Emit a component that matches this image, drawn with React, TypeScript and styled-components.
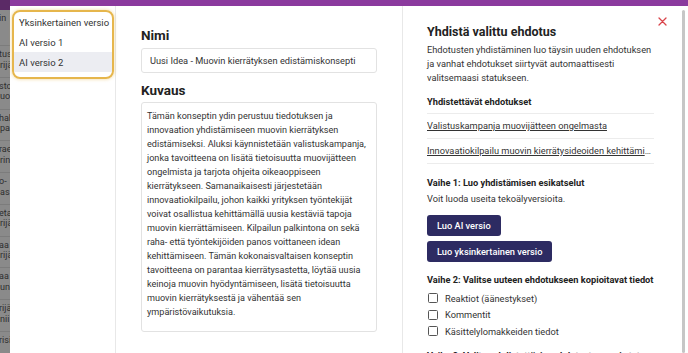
import React from "react";
import styled, { createGlobalStyle } from "styled-components";

const GlobalStyle = createGlobalStyle`
  html, body { margin: 0; padding: 0; height: 353px; overflow: hidden; background: #fff; }
  body { font-family: Roboto, "Noto Sans", Arial, sans-serif; color: #2b2b2b; }
  * { box-sizing: border-box; }
`;

const Page = styled.div`
  display: flex;
  height: 353px;
  overflow: hidden;
`;

const Backdrop = styled.div`
  flex: none;
  width: 10px;
  display: flex;
  flex-direction: column;
  background: #8a8a8a;
  overflow: hidden;
`;

const BackdropHeader = styled.div`
  flex: none;
  height: 10px;
  background: #5b2a66;
`;

const BackdropRow = styled.div<{ $h: number }>`
  flex: none;
  height: ${(p) => p.$h}px;
  border-bottom: 1px solid #7c7c7c;
  padding-top: 3px;
  font-size: 9px;
  line-height: 10.5px;
  color: #2e2e2e;
  white-space: nowrap;
  text-indent: -1px;
`;

const Modal = styled.div`
  flex: 1;
  display: flex;
  flex-direction: column;
  min-width: 0;
  background: #fff;
`;

const TopBar = styled.div`
  flex: none;
  height: 6px;
  background: #8b3a9e;
`;

const Body = styled.div`
  flex: 1;
  display: flex;
  min-height: 0;
`;

const LeftPanel = styled.div`
  flex: none;
  width: 106px;
  border-right: 1px solid #e8e8e8;
  padding: 4px 1px 0 2px;
`;

const VersionList = styled.div`
  border: 2px solid #e6b64c;
  border-radius: 8px;
  box-shadow: 0 0 3px 1px rgba(230, 182, 76, 0.35);
  padding: 0 0 5px;
  overflow: hidden;
`;

const VersionItem = styled.div<{ $active?: boolean }>`
  height: 20px;
  display: flex;
  align-items: center;
  padding-left: 5px;
  font-size: 9.5px;
  color: #333;
  background: ${(p) => (p.$active ? "#ecedf2" : "transparent")};
`;

const MiddlePanel = styled.div`
  flex: none;
  width: 287px;
  border-right: 1px solid #e8e8e8;
  padding: 21px 25px 0;
  display: flex;
  flex-direction: column;
`;

const FieldLabel = styled.div<{ $mt?: number }>`
  font-size: 13.5px;
  line-height: 16px;
  font-weight: 700;
  color: #222;
  margin-top: ${(p) => p.$mt ?? 0}px;
`;

const TextInput = styled.input`
  margin-top: 5px;
  height: 25px;
  width: 236px;
  border: 1px solid #e2e2e2;
  border-radius: 3px;
  padding: 0 8px;
  font-family: Roboto, "Noto Sans", Arial, sans-serif;
  font-size: 9.25px;
  color: #333;
  outline: none;
`;

const TextArea = styled.textarea`
  margin-top: 4px;
  width: 236px;
  height: 230px;
  border: 1px solid #e2e2e2;
  border-radius: 3px;
  padding: 6px 1px 0 5px;
  font-family: Roboto, "Noto Sans", Arial, sans-serif;
  font-size: 9.1px;
  line-height: 14px;
  color: #333;
  resize: none;
  overflow: hidden;
  outline: none;
`;

const RightPanel = styled.div`
  flex: none;
  width: 278px;
  position: relative;
  padding: 18px 27px 0 24px;
  display: flex;
  flex-direction: column;
  overflow: hidden;
`;

const CloseButton = styled.button`
  position: absolute;
  top: 11px;
  left: 255px;
  width: 9px;
  height: 9px;
  padding: 0;
  border: none;
  background: none;
  display: flex;
  cursor: pointer;
`;

const Title = styled.h2`
  margin: 0;
  font-size: 12.5px;
  line-height: 16px;
  font-weight: 700;
  color: #222;
`;

const Paragraph = styled.p<{ $mt?: number }>`
  margin: ${(p) => p.$mt ?? 0}px 0 0;
  font-size: 9.25px;
  line-height: 14px;
  color: #333;
`;

const SectionTitle = styled.div<{ $mt: number }>`
  margin-top: ${(p) => p.$mt}px;
  font-size: 9.25px;
  line-height: 14px;
  font-weight: 700;
  color: #222;
  white-space: nowrap;
`;

const MergeList = styled.div`
  margin-top: 4px;
  border-top: 1px solid #ececec;
`;

const MergeItem = styled.a`
  display: block;
  height: 25px;
  line-height: 24px;
  border-bottom: 1px solid #ececec;
  font-size: 9.25px;
  color: #333;
  text-decoration: underline;
  text-underline-offset: 1px;
  white-space: nowrap;
  overflow: hidden;
  text-overflow: ellipsis;
`;

const ButtonStack = styled.div`
  margin-top: 9px;
  display: flex;
  flex-direction: column;
  align-items: flex-start;
  gap: 5px;
`;

const PrimaryButton = styled.button`
  height: 21px;
  padding: 0 10px;
  border: none;
  border-radius: 3px;
  background: #2d2b62;
  color: #fff;
  font-family: Roboto, "Noto Sans", Arial, sans-serif;
  font-size: 9.25px;
  font-weight: 500;
  cursor: pointer;
`;

const CheckList = styled.div`
  margin-top: 3px;
  display: flex;
  flex-direction: column;
`;

const CheckRow = styled.label`
  height: 16.5px;
  display: flex;
  align-items: center;
  gap: 7px;
  font-size: 9.25px;
  color: #333;
`;

const CheckBox = styled.input`
  appearance: none;
  margin: 0 0 0 1px;
  width: 10px;
  height: 10px;
  border: 1.3px solid #555;
  border-radius: 1.5px;
  background: #fff;
`;

const ScrollTrack = styled.div`
  flex: none;
  width: 7px;
  padding: 4px 0 0 1px;
  display: flex;
`;

const ScrollThumb = styled.div`
  width: 3px;
  height: 100%;
  border-radius: 2px;
  background: #c6c6c6;
`;

const backdropRows: [string, string][] = [
  ["tus", "rijä"],
  ["sto", "uo"],
  ["hal", "par"],
  ["rae", "rin"],
  ["o-", "as"],
  ["eta", "rijä"],
  ["aa", "rijä"],
  ["aa", "uni"],
  ["rijä", "nii"],
  ["risi", ""],
];

const description =
  "Tämän konseptin ydin perustuu tiedotuksen ja innovaation yhdistämiseen muovin kierrätyksen edistämiseksi. Aluksi käynnistetään valistuskampanja, jonka tavoitteena on lisätä tietoisuutta muovijätteen ongelmista ja tarjota ohjeita oikeaoppiseen kierrätykseen. Samanaikaisesti järjestetään innovaatiokilpailu, johon kaikki yrityksen työntekijät voivat osallistua kehittämällä uusia kestäviä tapoja muovin kierrättämiseen. Kilpailun palkintona on sekä raha- että työntekijöiden panos voittaneen idean kehittämiseen. Tämän kokonaisvaltaisen konseptin tavoitteena on parantaa kierrätysastetta, löytää uusia keinoja muovin hyödyntämiseen, lisätä tietoisuutta muovin kierrätyksestä ja vähentää sen ympäristövaikutuksia.";

export default function App() {
  return (
    <>
      <GlobalStyle />
      <Page>
        <Backdrop>
          <BackdropHeader />
          <BackdropRow $h={36}>in</BackdropRow>
          {backdropRows.map(([a, b], i) => (
            <BackdropRow key={i} $h={31.75}>
              {a}
              <br />
              {b}
            </BackdropRow>
          ))}
        </Backdrop>
        <Modal>
          <TopBar />
          <Body>
            <LeftPanel>
              <VersionList>
                <VersionItem>Yksinkertainen versio</VersionItem>
                <VersionItem>AI versio 1</VersionItem>
                <VersionItem $active>AI versio 2</VersionItem>
              </VersionList>
            </LeftPanel>
            <MiddlePanel>
              <FieldLabel>Nimi</FieldLabel>
              <TextInput defaultValue="Uusi Idea - Muovin kierrätyksen edistämiskonsepti" />
              <FieldLabel $mt={9}>Kuvaus</FieldLabel>
              <TextArea readOnly value={description} />
            </MiddlePanel>
            <RightPanel>
              <CloseButton aria-label="Sulje">
                <svg width="9" height="9" viewBox="0 0 9 9">
                  <path d="M1 1L8 8M8 1L1 8" stroke="#d9444a" strokeWidth="1.3" strokeLinecap="round" />
                </svg>
              </CloseButton>
              <Title>Yhdistä valittu ehdotus</Title>
              <Paragraph $mt={3}>
                Ehdotusten yhdistäminen luo täysin uuden ehdotuksen ja vanhat ehdotukset siirtyvät automaattisesti
                valitsemaasi statukseen.
              </Paragraph>
              <SectionTitle $mt={10}>Yhdistettävät ehdotukset</SectionTitle>
              <MergeList>
                <MergeItem>Valistuskampanja muovijätteen ongelmasta</MergeItem>
                <MergeItem>Innovaatiokilpailu muovin kierrätysideoiden kehittämiseksi</MergeItem>
              </MergeList>
              <SectionTitle $mt={12}>Vaihe 1: Luo yhdistämisen esikatselut</SectionTitle>
              <Paragraph $mt={2}>Voit luoda useita tekoälyversioita.</Paragraph>
              <ButtonStack>
                <PrimaryButton>Luo AI versio</PrimaryButton>
                <PrimaryButton>Luo yksinkertainen versio</PrimaryButton>
              </ButtonStack>
              <SectionTitle $mt={11}>Vaihe 2: Valitse uuteen ehdotukseen kopioitavat tiedot</SectionTitle>
              <CheckList>
                <CheckRow>
                  <CheckBox type="checkbox" />
                  Reaktiot (äänestykset)
                </CheckRow>
                <CheckRow>
                  <CheckBox type="checkbox" />
                  Kommentit
                </CheckRow>
                <CheckRow>
                  <CheckBox type="checkbox" />
                  Käsittelylomakkeiden tiedot
                </CheckRow>
              </CheckList>
              <SectionTitle $mt={9}>Vaihe 3: Valitse yhdistettävien ehdotusten uusi status</SectionTitle>
            </RightPanel>
            <ScrollTrack>
              <ScrollThumb />
            </ScrollTrack>
          </Body>
        </Modal>
      </Page>
    </>
  );
}
